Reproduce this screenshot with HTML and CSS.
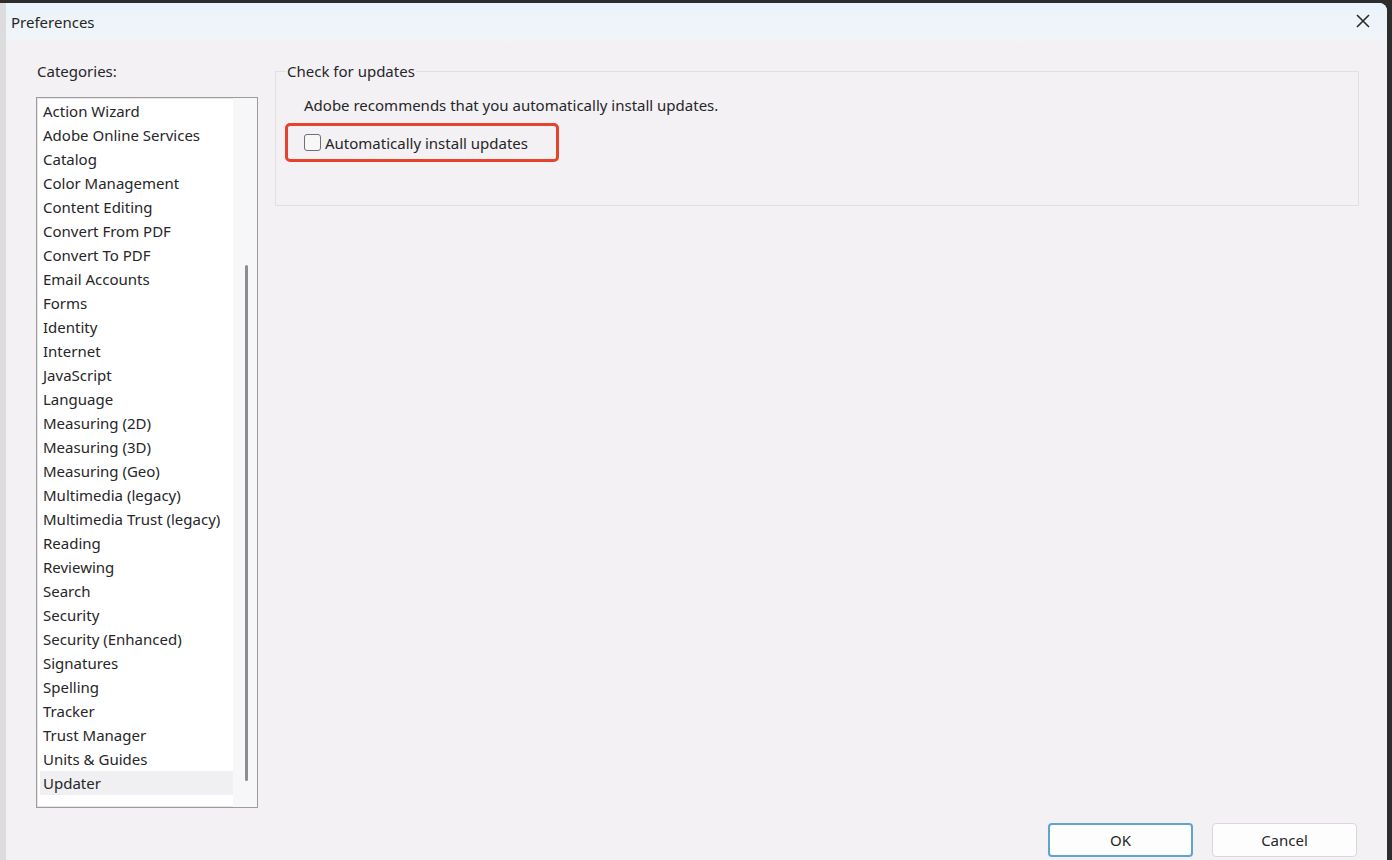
FILE: index.html
```html
<!DOCTYPE html>
<html lang="en">
<head>
    <meta charset="UTF-8">
    <title>Preferences</title>
    <link rel="stylesheet" href="styles.css">
</head>
<body>
    <div class="dialog">
        <div class="titlebar">
            <span class="title">Preferences</span>
            <svg class="close" width="16" height="16" viewBox="0 0 16 16">
                <path d="M2 2 L14 14 M14 2 L2 14" stroke="#2b2b2b" stroke-width="1.6" fill="none"/>
            </svg>
        </div>
        <div class="content">
            <div class="categories">
                <div class="cat-label">Categories:</div>
                <div class="listbox">
                    <ul class="items">
                        <li>Action Wizard</li>
                        <li>Adobe Online Services</li>
                        <li>Catalog</li>
                        <li>Color Management</li>
                        <li>Content Editing</li>
                        <li>Convert From PDF</li>
                        <li>Convert To PDF</li>
                        <li>Email Accounts</li>
                        <li>Forms</li>
                        <li>Identity</li>
                        <li>Internet</li>
                        <li>JavaScript</li>
                        <li>Language</li>
                        <li>Measuring (2D)</li>
                        <li>Measuring (3D)</li>
                        <li>Measuring (Geo)</li>
                        <li>Multimedia (legacy)</li>
                        <li>Multimedia Trust (legacy)</li>
                        <li>Reading</li>
                        <li>Reviewing</li>
                        <li>Search</li>
                        <li>Security</li>
                        <li>Security (Enhanced)</li>
                        <li>Signatures</li>
                        <li>Spelling</li>
                        <li>Tracker</li>
                        <li>Trust Manager</li>
                        <li>Units &amp; Guides</li>
                        <li class="selected">Updater</li>
                    </ul>
                    <div class="scrollbar">
                        <div class="thumb"></div>
                    </div>
                </div>
            </div>
            <div class="panel">
                <fieldset class="group">
                    <legend>Check for updates</legend>
                    <p class="note">Adobe recommends that you automatically install updates.</p>
                    <label class="highlight">
                        <span class="checkbox"></span>
                        <span>Automatically install updates</span>
                    </label>
                </fieldset>
            </div>
        </div>
        <div class="buttons">
            <button class="btn primary">OK</button>
            <button class="btn">Cancel</button>
        </div>
    </div>
</body>
</html>
```

FILE: styles.css
```css
body {
    margin: 0;
    background-color: #2d2d2d;
    font-family: "Noto Sans", "Open Sans", sans-serif;
    font-size: 15px;
    color: #262628;
}
.dialog {
    width: 1381px;
    height: 857px;
    margin-top: 3px;
    border-left: 6px solid #dcdcdc;
    background-color: #f3f1f4;
    display: flex;
    flex-direction: column;
    overflow: hidden;
    border-top-right-radius: 8px;
}
.titlebar {
    height: 38px;
    display: flex;
    align-items: center;
    justify-content: space-between;
    padding: 0 16px 0 5px;
    background: linear-gradient(#eaf4fa, #f1f4f8);
}
.title {
    font-size: 15px;
    margin-top: -1px;
}
.close {
    margin-top: -2px;
}
.content {
    flex: 1;
    display: flex;
    padding: 20px 28px 0 30px;
    gap: 17px;
}
.categories {
    width: 222px;
    display: flex;
    flex-direction: column;
}
.cat-label {
    padding-left: 1px;
    line-height: 20px;
    margin-bottom: 16px;
}
.listbox {
    height: 709px;
    border: 1px solid #9c9c9c;
    box-shadow: inset 0 0 0 1px #e6e6e6;
    background-color: #ffffff;
    display: flex;
}
.items {
    list-style: none;
    margin: 0;
    padding: 1px 0 0 3px;
    width: 193px;
}
.items li {
    height: 24px;
    line-height: 24px;
    padding-left: 3px;
    white-space: nowrap;
}
.items li.selected {
    background-color: #f0eff2;
}
.scrollbar {
    flex: 1;
    background-color: #f7f6f8;
    display: flex;
    justify-content: center;
    padding-top: 167px;
}
.thumb {
    width: 3px;
    height: 516px;
    border-radius: 2px;
    background-color: #8d8d8f;
    margin-left: 2px;
}
.panel {
    flex: 1;
}
.group {
    margin: 0;
    height: 145px;
    box-sizing: border-box;
    border: 1px solid #e0dfe2;
    padding: 0 0 0 10px;
}
.group legend {
    padding: 0 1px;
    line-height: 20px;
}
.note {
    margin: 14px 0 0 18px;
    line-height: 20px;
}
.highlight {
    display: inline-flex;
    align-items: center;
    gap: 4px;
    width: 274px;
    height: 39px;
    box-sizing: border-box;
    margin: 8px 0 0 -1px;
    padding-left: 16px;
    border: 3px solid #e6432c;
    border-radius: 5px;
}
.checkbox {
    width: 15px;
    height: 15px;
    border: 1.5px solid #707072;
    border-radius: 3px;
    background-color: #f7f7f8;
}
.buttons {
    display: flex;
    justify-content: flex-end;
    gap: 19px;
    padding: 2px 30px 0 0;
    height: 37px;
}
.btn {
    width: 145px;
    height: 34px;
    font-family: inherit;
    font-size: 15px;
    color: #262628;
    background-color: #fdfdfd;
    border: 1px solid #d8d8da;
    border-radius: 4px;
}
.btn.primary {
    border: 2px solid #5aa6cf;
}
```
